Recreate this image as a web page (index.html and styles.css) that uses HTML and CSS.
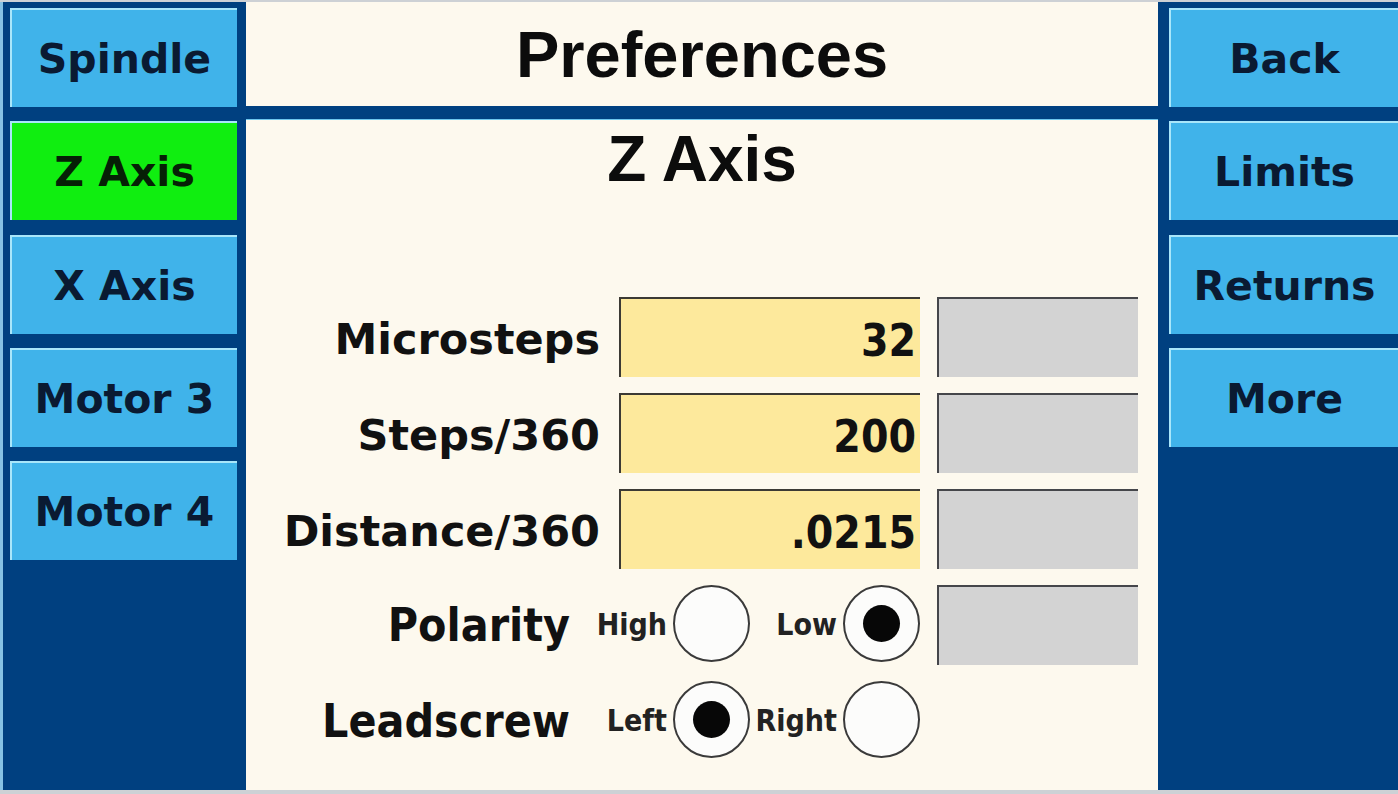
FILE: index.html
```html
<!DOCTYPE html>
<html lang="en">
<head>
<meta charset="utf-8">
<title>Preferences - Z Axis</title>
<link rel="stylesheet" href="styles.css">
</head>
<body>
<div class="screen">
  <nav class="side side-left">
    <div class="btn">Spindle</div>
    <div class="btn active">Z Axis</div>
    <div class="btn">X Axis</div>
    <div class="btn">Motor 3</div>
    <div class="btn">Motor 4</div>
  </nav>
  <main class="center">
    <header class="head"><h1 class="title">Preferences</h1></header>
    <div class="bar"></div>
    <section class="body">
      <h2 class="subtitle">Z Axis</h2>
      <div class="form">
        <div class="row">
          <span class="label">Microsteps</span>
          <span class="field">32</span>
          <span class="aux"></span>
        </div>
        <div class="row">
          <span class="label">Steps/360</span>
          <span class="field">200</span>
          <span class="aux"></span>
        </div>
        <div class="row">
          <span class="label">Distance/360</span>
          <span class="field">.0215</span>
          <span class="aux"></span>
        </div>
        <div class="row">
          <span class="rlabel">Polarity</span>
          <span class="opt">High</span>
          <span class="radio"></span>
          <span class="opt opt2">Low</span>
          <span class="radio on"></span>
          <span class="aux"></span>
        </div>
        <div class="row">
          <span class="rlabel">Leadscrew</span>
          <span class="opt">Left</span>
          <span class="radio on"></span>
          <span class="opt opt2">Right</span>
          <span class="radio"></span>
        </div>
      </div>
    </section>
  </main>
  <nav class="side side-right">
    <div class="btn">Back</div>
    <div class="btn">Limits</div>
    <div class="btn">Returns</div>
    <div class="btn">More</div>
  </nav>
</div>
</body>
</html>
```
FILE: styles.css
```css
* { box-sizing: border-box; }

html, body {
  margin: 0;
  padding: 0;
}

body {
  width: 1398px;
  height: 794px;
  overflow: hidden;
  background: #cdd1d5;
  padding-top: 2px;
}

.screen {
  display: grid;
  grid-template-columns: 243px 912px 240px;
  height: 788px;
  border-left: 3px solid #86c2e4;
  width: 1398px;
}

.side {
  background: #004080;
  display: flex;
  flex-direction: column;
  gap: 14.3px;
  padding-top: 6px;
}

.side-left {
  padding-left: 7px;
  padding-right: 9px;
}

.side-right {
  padding-left: 11px;
}

.btn {
  height: 99px;
  background: #40b3ea;
  border-top: 2px solid #a9e6fa;
  border-left: 2px solid #a9e6fa;
  display: flex;
  align-items: center;
  justify-content: center;
  padding-top: 2px;
  font-family: "DejaVu Sans", sans-serif;
  font-weight: bold;
  font-size: 41px;
  line-height: 1;
  color: #0a1a32;
  white-space: nowrap;
}

.btn.active {
  background: #10ee10;
  color: #062006;
}

.center {
  display: flex;
  flex-direction: column;
  background: #fdf9ee;
}

.head {
  height: 104px;
  display: flex;
  align-items: center;
  justify-content: center;
}

.title, .subtitle {
  margin: 0;
  font-family: "Liberation Sans", Arial, sans-serif;
  font-weight: bold;
  font-size: 64px;
  line-height: 64px;
  color: #0c0c0c;
  text-align: center;
}

.title { font-size: 65px; line-height: 65px; }

.bar {
  height: 14px;
  background: #004080;
  border-bottom: 1px solid #6ec6ee;
}

.body {
  flex: 1;
  padding-top: 7px;
}

.form {
  margin-top: 106px;
  display: flex;
  flex-direction: column;
  gap: 16px;
}

.row {
  display: flex;
  align-items: center;
  height: 80px;
}

.label {
  width: 354px;
  text-align: right;
  font-family: "DejaVu Sans", sans-serif;
  font-weight: bold;
  font-size: 43px;
  line-height: 1;
  color: #111;
  padding-top: 5px;
  white-space: nowrap;
}

.field {
  margin-left: 19px;
  width: 301px;
  height: 80px;
  background: #fde99c;
  border-top: 2px solid #3c3a34;
  border-left: 2px solid #3c3a34;
  display: flex;
  align-items: center;
  justify-content: flex-end;
  padding-right: 4px;
  padding-top: 6px;
  font-family: "DejaVu Sans Condensed", "DejaVu Sans", sans-serif;
  font-stretch: condensed;
  font-weight: bold;
  font-size: 44px;
  line-height: 1;
  color: #111;
}

.aux {
  margin-left: 17px;
  width: 201px;
  height: 80px;
  background: #d3d3d3;
  border-top: 2px solid #45464a;
  border-left: 2px solid #45464a;
}

.rlabel {
  width: 324px;
  text-align: right;
  font-family: "DejaVu Sans Condensed", "DejaVu Sans", sans-serif;
  font-stretch: condensed;
  font-weight: bold;
  font-size: 46px;
  line-height: 1;
  color: #111;
  white-space: nowrap;
}

.opt {
  width: 97px;
  text-align: right;
  font-family: "DejaVu Sans Condensed", "DejaVu Sans", sans-serif;
  font-stretch: condensed;
  font-weight: bold;
  font-size: 30px;
  line-height: 1;
  color: #222;
  white-space: nowrap;
}

.opt2 { width: 87px; }

.radio {
  margin-left: 6px;
  width: 77px;
  height: 77px;
  border-radius: 50%;
  border: 2px solid #3a3a3a;
  background: #fcfcfb;
  display: flex;
  align-items: center;
  justify-content: center;
  margin-top: -4px;
}

.radio.on::after {
  content: "";
  width: 37px;
  height: 37px;
  border-radius: 50%;
  background: #070707;
}
```
